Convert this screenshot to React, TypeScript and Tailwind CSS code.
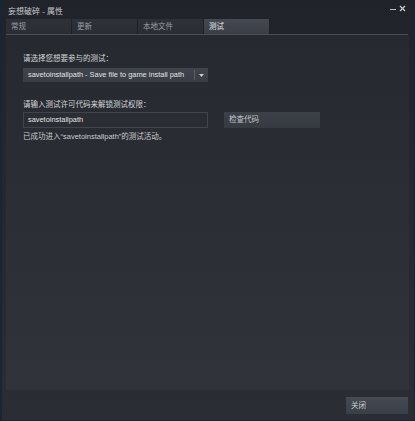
import React from "react";

const cjk = { fontFamily: '"Liberation Sans", "Noto Sans CJK SC", sans-serif' };

function Tab({ label, active }: { label: string; active?: boolean }) {
  return (
    <div
      className={
        "w-[66px] h-[15px] flex items-center pl-[5px] text-[7.5px] border-r border-[#1d2025] " +
        (active
          ? "bg-gradient-to-b from-[#444952] to-[#3a3e46] text-[#e6e6e6]"
          : "bg-gradient-to-b from-[#2e3137] to-[#2a2d33] text-[#9a9ea6]")
      }
    >
      {label}
    </div>
  );
}

export default function App() {
  return (
    <div
      className="w-[415px] h-[421px] bg-gradient-to-b from-[#202329] to-[#2a2d33] border-l-2 border-r border-b border-[#1a2434] flex flex-col text-[#c6c8cc] relative"
      style={cjk}
    >
      {/* title bar */}
      <div className="h-[19px] flex items-center pl-[6px] text-[8px] text-[#c9cbcf] pt-[5px]">
        妄想破碎 - 属性
      </div>
      <div className="absolute right-[8px] top-[5px] flex items-end gap-[3px]">
        <div className="w-[6px] h-[1.5px] bg-[#b9bcc2] mb-[2px]" />
        <svg width="7" height="7" viewBox="0 0 7 7">
          <path d="M1 1L6 6M6 1L1 6" stroke="#c3c6cb" strokeWidth="1.4" />
        </svg>
      </div>

      {/* tabs */}
      <div className="ml-[4px] mr-[6px] flex border-b border-[#4a4e56]">
        <Tab label="常规" />
        <Tab label="更新" />
        <Tab label="本地文件" />
        <Tab label="测试" active />
      </div>

      {/* content panel */}
      <div className="ml-[4px] mr-[5px] h-[355px] bg-gradient-to-b from-[#26292f] to-[#30333a] pl-[17px] pt-[19px] flex flex-col">
        <div className="text-[7.5px] text-[#d4d6da] h-[10px] leading-[10px]">请选择您想要参与的测试：</div>
        <div className="mt-[4px] w-[185px] h-[14px] bg-gradient-to-b from-[#40444c] to-[#393d45] flex items-center">
          <div className="flex-1 pl-[5px] text-[7.4px] text-[#e2e4e7] whitespace-nowrap">
            savetoinstallpath - Save file to game install path
          </div>
          <div className="w-px h-[10px] bg-[#5a5e66]" />
          <div className="w-[13px] flex justify-center">
            <svg width="5" height="3" viewBox="0 0 5 3">
              <path d="M0 0H5L2.5 3Z" fill="#c8cace" />
            </svg>
          </div>
        </div>

        <div className="mt-[18px] text-[7.5px] text-[#d4d6da] h-[10px] leading-[10px]">请输入测试许可代码来解锁测试权限：</div>
        <div className="mt-[2px] flex items-center gap-[16px]">
          <div className="w-[185px] h-[16px] border border-[#40454d] bg-[#2a2d33] flex items-center pl-[4px] text-[7.4px] text-[#e2e4e7]">
            savetoinstallpath
          </div>
          <div className="w-[96px] h-[16px] bg-gradient-to-b from-[#3c4048] to-[#363a41] flex items-center pl-[5px] text-[7.5px] text-[#c4c6ca]">
            检查代码
          </div>
        </div>
        <div className="mt-[4px] text-[7.5px] text-[#c9cbcf] h-[10px] leading-[10px]">
          已成功进入“savetoinstallpath”的测试活动。
        </div>
      </div>

      {/* footer */}
      <div className="flex justify-end pr-[6px] pt-[7px]">
        <div className="w-[62px] h-[17px] bg-gradient-to-b from-[#454952] to-[#3a3e46] flex items-center pl-[5px] text-[7.5px] text-[#d0d2d6]">
          关闭
        </div>
      </div>
    </div>
  );
}
